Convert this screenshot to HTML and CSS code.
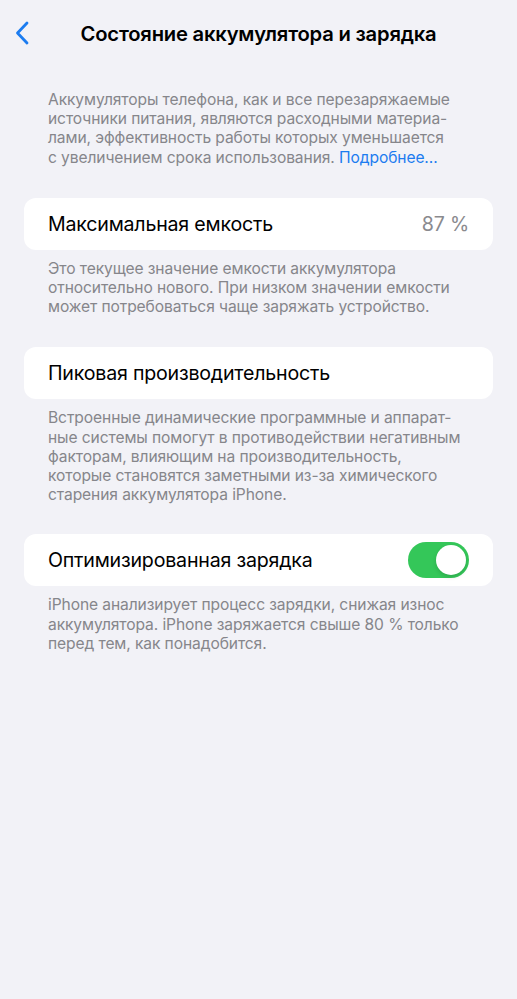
FILE: index.html
```html
<!DOCTYPE html>
<html lang="ru">
<head>
    <meta charset="UTF-8">
    <meta name="viewport" content="width=device-width, initial-scale=1.0">
    <title>Состояние аккумулятора и зарядка</title>
    <link rel="stylesheet" href="styles.css">
</head>
<body>

    <header class="nav-bar">
        <a class="back" href="#">
            <svg width="14" height="24" viewBox="0 0 14 24">
                <path d="M12 2 L2.5 12 L12 22" fill="none" stroke="#1c7cf0" stroke-width="2.8" stroke-linecap="round" stroke-linejoin="round"/>
            </svg>
        </a>
        <h1 class="nav-title">Состояние аккумулятора и зарядка</h1>
    </header>

    <p class="note intro">
        Аккумуляторы телефона, как и все перезаряжаемые<br>
        источники питания, являются расходными материа-<br>
        лами, эффективность работы которых уменьшается<br>
        с увеличением срока использования. <a href="#" class="link">Подробнее…</a>
    </p>

    <section class="group">
        <div class="cell">
            <span class="cell-label">Максимальная емкость</span>
            <span class="cell-value">87 %</span>
        </div>
        <p class="note">
            Это текущее значение емкости аккумулятора<br>
            относительно нового. При низком значении емкости<br>
            может потребоваться чаще заряжать устройство.
        </p>
    </section>

    <section class="group">
        <div class="cell">
            <span class="cell-label">Пиковая производительность</span>
        </div>
        <p class="note">
            Встроенные динамические программные и аппарат-<br>
            ные системы помогут в противодействии негативным<br>
            факторам, влияющим на производительность,<br>
            которые становятся заметными из-за химического<br>
            старения аккумулятора iPhone.
        </p>
    </section>

    <section class="group last">
        <div class="cell">
            <span class="cell-label">Оптимизированная зарядка</span>
            <span class="switch on"><span class="knob"></span></span>
        </div>
        <p class="note">
            iPhone анализирует процесс зарядки, снижая износ<br>
            аккумулятора. iPhone заряжается свыше 80 % только<br>
            перед тем, как понадобится.
        </p>
    </section>

</body>
</html>
```

FILE: styles.css
```css
body {
    margin: 0;
    background-color: #f2f2f7;
    font-family: Inter, "Noto Sans", sans-serif;
    color: #000;
    -webkit-font-smoothing: antialiased;
}

.nav-bar {
    position: relative;
    height: 66px;
    display: flex;
    align-items: center;
    justify-content: center;
}

.back {
    position: absolute;
    left: 15px;
    top: 21px;
    display: block;
    line-height: 0;
}

.nav-title {
    margin: 0;
    font-size: 20.2px;
    font-weight: 600;
    letter-spacing: -0.2px;
}

.note {
    margin: 0;
    padding: 0 40px 0 48px;
    font-size: 15.6px;
    line-height: 19.2px;
    color: #86868b;
    letter-spacing: -0.1px;
    white-space: nowrap;
}

.intro {
    margin-top: 24px;
}

.link {
    color: #1c7cf0;
    text-decoration: none;
}

.group {
    margin-top: 31px;
}

.group.last {
    margin-top: 30px;
}

.group .note {
    margin-top: 9px;
}

.cell {
    margin: 0 24px;
    height: 52px;
    padding: 0 24px;
    background: #fff;
    border-radius: 12px;
    display: flex;
    align-items: center;
    justify-content: space-between;
    font-size: 19.6px;
    letter-spacing: -0.2px;
}

.cell-value {
    color: #8a8a8e;
}

.switch {
    width: 61px;
    height: 36px;
    border-radius: 18px;
    background: #e9e9eb;
    position: relative;
}

.switch.on {
    background: #34c759;
}

.knob {
    position: absolute;
    top: 3px;
    right: 3px;
    width: 30px;
    height: 30px;
    border-radius: 50%;
    background: #fff;
    box-shadow: 0 2px 4px rgba(0, 0, 0, 0.15);
}
```
